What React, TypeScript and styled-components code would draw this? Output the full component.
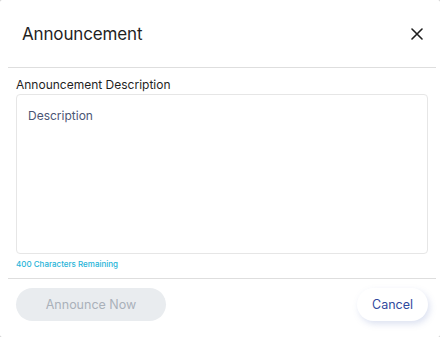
import styled, { createGlobalStyle } from "styled-components";

const Global = createGlobalStyle`
  html, body {
    margin: 0;
    padding: 0;
    background: #c8c8c8;
  }
  * { box-sizing: border-box; }
`

const Modal = styled.div`
  width: 440px;
  height: 337px;
  background: #fff;
  border-radius: 2px;
  font-family: Inter, "Noto Sans", sans-serif;
  display: flex;
  flex-direction: column;
  padding: 0 4px 0 8px;
`

const Header = styled.div`
  height: 68px;
  display: flex;
  align-items: center;
  justify-content: space-between;
  padding: 0 12px 0 14px;
  border-bottom: 1px solid #dedede;
`

const Title = styled.h2`
  margin: 0;
  font-size: 17px;
  font-weight: 400;
  color: #1f1f1f;
  letter-spacing: -0.15px;
`

const CloseBtn = styled.button`
  border: none;
  background: none;
  padding: 0;
  width: 14px;
  height: 14px;
  display: flex;
  align-items: center;
  justify-content: center;
  cursor: pointer;
`

const Body = styled.div`
  padding: 9px 8px 0 8px;
  height: 211px;
  border-bottom: 1px solid #dedede;
  display: flex;
  flex-direction: column;
`

const Label = styled.label`
  font-size: 12px;
  color: #1f1f1f;
  line-height: 16px;
  margin-bottom: 1px;
`

const TextArea = styled.textarea`
  height: 160px;
  width: 412px;
  border: 1px solid #e6e6e6;
  border-radius: 4px;
  padding: 13px 11px;
  resize: none;
  font-family: inherit;
  font-size: 12px;
  outline: none;
  &::placeholder {
    color: #4b5675;
  }
`

const Remaining = styled.div`
  margin-top: 5px;
  font-size: 8px;
  font-weight: 500;
  color: #1fb4d8;
`

const Footer = styled.div`
  display: flex;
  justify-content: space-between;
  align-items: center;
  padding: 9px 8px 0 8px;
`

const Pill = styled.button<{ $primary?: boolean }>`
  height: 33px;
  border-radius: 17px;
  border: none;
  font-family: inherit;
  font-size: 12.5px;
  cursor: pointer;
  background: ${p => (p.$primary ? "#e9ecef" : "#fff")};
  color: ${p => (p.$primary ? "#aab1ba" : "#2f4a9e")};
  width: ${p => (p.$primary ? "150px" : "71px")};
  box-shadow: ${p => (p.$primary ? "none" : "2px 3px 6px rgba(120,140,200,0.25)")};
`

function App() {
  return (
    <>
      <Global />
      <Modal>
        <Header>
          <Title>Announcement</Title>
          <CloseBtn aria-label="close">
            <svg width="12" height="12" viewBox="0 0 12 12">
              <path d="M1 1L11 11M11 1L1 11" stroke="#1f1f1f" strokeWidth="1.6" strokeLinecap="round" />
            </svg>
          </CloseBtn>
        </Header>
        <Body>
          <Label>Announcement Description</Label>
          <TextArea placeholder="Description" />
          <Remaining>400 Characters Remaining</Remaining>
        </Body>
        <Footer>
          <Pill $primary disabled>Announce Now</Pill>
          <Pill>Cancel</Pill>
        </Footer>
      </Modal>
    </>
  )
}

export default App;
